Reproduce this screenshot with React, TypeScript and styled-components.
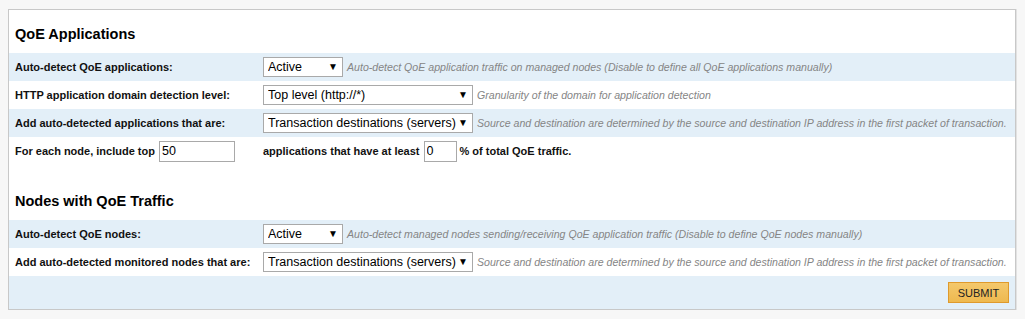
import React from 'react'
import styled, { createGlobalStyle } from 'styled-components'

const GlobalStyle = createGlobalStyle`
  html, body {
    margin: 0;
    padding: 0;
    background: #f7f7f7;
  }
  body {
    padding: 9px 9px 0 8px;
    font-family: "Liberation Sans", Arial, sans-serif;
    color: #111;
  }
`

const Panel = styled.form`
  background: #ffffff;
  border: 1px solid #c8c8c8;
  box-shadow: 1px 0 0 #e2e2e2;
`

const Section = styled.section<{ $spaced?: boolean }>`
  margin-top: ${p => (p.$spaced ? '12px' : '0')};
`

const Heading = styled.h2`
  margin: 0;
  padding: 14px 6px 9px;
  font-size: 14.5px;
  line-height: 20px;
  font-weight: bold;
  color: #000;
`

const Row = styled.div<{ $shaded?: boolean }>`
  display: grid;
  grid-template-columns: 248px 1fr;
  align-items: center;
  height: 28px;
  padding: 0 6px;
  background: ${p => (p.$shaded ? '#e3eff8' : '#ffffff')};
`

const Label = styled.label`
  font-size: 11px;
  font-weight: bold;
  color: #111;
  white-space: nowrap;
`

const Cell = styled.div`
  display: flex;
  align-items: center;
  gap: 3px;
  font-size: 11px;
  font-weight: bold;
  white-space: nowrap;
`

const SelectWrap = styled.div<{ $width: number }>`
  position: relative;
  width: ${p => p.$width}px;
  height: 20px;
  flex: none;
`

const NativeSelect = styled.select`
  appearance: none;
  -webkit-appearance: none;
  width: 100%;
  height: 100%;
  margin: 0;
  padding: 0 16px 0 4px;
  border: 1px solid #a9a9a9;
  border-radius: 0;
  background: #fff;
  font-family: "Liberation Sans", Arial, sans-serif;
  font-size: 12.5px;
  color: #000;
  outline: none;
`

const Arrow = styled.span`
  position: absolute;
  right: 5px;
  top: 5px;
  font-size: 10px;
  line-height: 10px;
  color: #000;
  pointer-events: none;
`

const Hint = styled.span`
  margin-left: 1px;
  font-size: 10.6px;
  font-weight: normal;
  font-style: italic;
  color: #858585;
`

const TextInput = styled.input<{ $width: number }>`
  box-sizing: border-box;
  width: ${p => p.$width}px;
  height: 21px;
  margin: 0 0 0 1px;
  padding: 0 2px;
  border: 1px solid #a9a9a9;
  font-family: "Liberation Sans", Arial, sans-serif;
  font-size: 12.5px;
  color: #000;
  outline: none;
`

const SubmitRow = styled.div`
  display: flex;
  justify-content: flex-end;
  align-items: center;
  height: 33px;
  padding: 0 6px;
  background: #e3eff8;
`

const SubmitButton = styled.button`
  width: 61px;
  height: 21px;
  padding: 0;
  border: 1px solid #df9a2c;
  background: linear-gradient(#f4c86c, #eeb94f);
  font-family: "Liberation Sans", Arial, sans-serif;
  font-size: 11px;
  color: #222;
  cursor: pointer;
`

type SelectProps = { width: number; value: string; options: string[] }

const Select = ({ width, value, options }: SelectProps) => (
  <SelectWrap $width={width}>
    <NativeSelect defaultValue={value}>
      {options.map(o => (
        <option key={o}>{o}</option>
      ))}
    </NativeSelect>
    <Arrow>▼</Arrow>
  </SelectWrap>
)

const stateOpts = ['Active', 'Disabled']
const levelOpts = ['Top level (http://*)', 'Second level (http://*/*)']
const destOpts = ['Transaction destinations (servers)', 'Transaction sources (clients)']

export default function App() {
  return (
    <>
      <GlobalStyle />
      <Panel onSubmit={e => e.preventDefault()}>
        <Section>
          <Heading>QoE Applications</Heading>
          <Row $shaded>
            <Label>Auto-detect QoE applications:</Label>
            <Cell>
              <Select width={80} value="Active" options={stateOpts} />
              <Hint>Auto-detect QoE application traffic on managed nodes (Disable to define all QoE applications manually)</Hint>
            </Cell>
          </Row>
          <Row>
            <Label>HTTP application domain detection level:</Label>
            <Cell>
              <Select width={210} value="Top level (http://*)" options={levelOpts} />
              <Hint>Granularity of the domain for application detection</Hint>
            </Cell>
          </Row>
          <Row $shaded>
            <Label>Add auto-detected applications that are:</Label>
            <Cell>
              <Select width={210} value="Transaction destinations (servers)" options={destOpts} />
              <Hint>Source and destination are determined by the source and destination IP address in the first packet of transaction.</Hint>
            </Cell>
          </Row>
          <Row>
            <Cell>
              For each node, include top
              <TextInput $width={76} defaultValue="50" />
            </Cell>
            <Cell>
              applications that have at least
              <TextInput $width={33} defaultValue="0" />
              % of total QoE traffic.
            </Cell>
          </Row>
        </Section>
        <Section $spaced>
          <Heading>Nodes with QoE Traffic</Heading>
          <Row $shaded>
            <Label>Auto-detect QoE nodes:</Label>
            <Cell>
              <Select width={80} value="Active" options={stateOpts} />
              <Hint>Auto-detect managed nodes sending/receiving QoE application traffic (Disable to define QoE nodes manually)</Hint>
            </Cell>
          </Row>
          <Row>
            <Label>Add auto-detected monitored nodes that are:</Label>
            <Cell>
              <Select width={210} value="Transaction destinations (servers)" options={destOpts} />
              <Hint>Source and destination are determined by the source and destination IP address in the first packet of transaction.</Hint>
            </Cell>
          </Row>
          <SubmitRow>
            <SubmitButton type="submit">SUBMIT</SubmitButton>
          </SubmitRow>
        </Section>
      </Panel>
    </>
  )
}
